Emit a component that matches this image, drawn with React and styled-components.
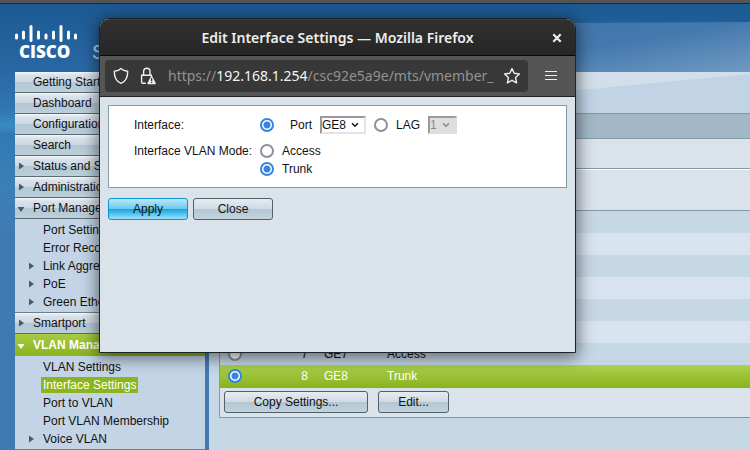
import React, { useState } from "react";
import styled, { createGlobalStyle, css } from "styled-components";

const GlobalStyle = createGlobalStyle`
  *, *::before, *::after { box-sizing: border-box; }
  html, body { margin: 0; height: 100%; overflow: hidden; }
  #root { height: 100%; }
  body { font: 12px/14px "Liberation Sans", Arial, sans-serif; color: #111; }
  button, select, input { font: inherit; color: inherit; margin: 0; }
`;

const Page = styled.div`
  height: 100%;
  display: flex;
  flex-direction: column;
  overflow: hidden;
  background: linear-gradient(#1b5992 0, #2a68a5 72px, #3077b1 110px, #3a8bc3 126px, #3079b4 134px, #3a80b8 180px, #407ab3 240px, #407ab3 100%);
`;

const WindowEdge = styled.div`
  flex: none;
  height: 4px;
  background: #555;
  border-bottom: 1px solid #1c2831;
`;

const Banner = styled.header`
  position: relative;
  flex: none;
  height: 68px;
  display: flex;
  align-items: flex-start;
  gap: 14px;
  padding: 20px 14px 0;
  &::before {
    content: "";
    position: absolute;
    inset: 18px 0 0 40%;
    background: linear-gradient(170deg, #3d70a4, #4479ae 60%, #6f9ac1);
    clip-path: polygon(0 5%, 100% 0, 100% 100%, 0 100%);
  }
`;

const Logo = styled.svg`
  position: relative;
  flex: none;
  display: block;
`;

const Product = styled.span`
  position: relative;
  padding-top: 16px;
  font: 20px/24px "Liberation Sans", Arial, sans-serif;
  color: #c3d6e8;
  white-space: nowrap;
`;

const Body = styled.div`
  flex: 1;
  min-height: 0;
  display: flex;
  gap: 4px;
  padding-left: 15px;
`;

const Nav = styled.nav`
  flex: none;
  width: 190px;
  background: #c2d4e6;
  overflow: hidden;
`;

const Section = styled.a`
  display: flex;
  align-items: center;
  height: ${(p) => (p.$active ? 22 : 21)}px;
  border-bottom: 1px solid ${(p) => (p.$active ? "#8a9aa8" : "#5b6b72")};
  color: ${(p) => (p.$active ? "#fff" : "#111")};
  font-weight: ${(p) => (p.$active ? 700 : 400)};
  text-decoration: none;
  white-space: nowrap;
  background: ${(p) =>
    p.$active
      ? "linear-gradient(#a6cb45, #8bb51e)"
      : "linear-gradient(#f4f7fa 0, #d9e2eb 3px, #cdd8e3 50%, #b3c8d5 50%, #bccfda 100%)"};
`;

const Marker = styled.svg`
  flex: none;
  display: block;
  width: 18px;
  height: 12px;
  fill: ${(p) => (p.$light ? "#fff" : "#4c5960")};
`;

const SubList = styled.ul`
  list-style: none;
  margin: 0;
  padding: 2px 0 1px 10px;
  border-bottom: 1px solid #6e808c;
`;

const SubItem = styled.li`
  display: flex;
  align-items: center;
  height: 18px;
  white-space: nowrap;
`;

const SubLink = styled.a`
  padding: 1px 2px;
  margin-left: -2px;
  text-decoration: none;
  color: ${(p) => (p.$current ? "#fff" : "#111")};
  background: ${(p) => (p.$current ? "#8bb51e" : "transparent")};
`;

const Main = styled.main`
  position: relative;
  flex: 1;
  min-width: 0;
  padding: 41px 0 0 10px;
  background: linear-gradient(#c1d3e5 0, #c1d3e5 40px, #c6d7e6 80px);
  &::before {
    content: "";
    position: absolute;
    top: 0;
    left: 0;
    right: 0;
    height: 42px;
    background: #d2dfea;
    clip-path: polygon(0 0, 100% 0, 100% 5%, 66% 46%, 0 100%);
  }
`;

const Panel = styled.section`
  position: relative;
  border: 1px solid #8499a5;
  border-right: 0;
  background: #dae2ea;
`;

const PanelTitle = styled.div`
  height: 25px;
  background: #a2b8c8;
  border-bottom: 1px solid #8499a5;
`;

const FilterBar = styled.div`
  height: 30px;
  border-bottom: 1px solid #8499a5;
`;

const PortTable = styled.table`
  width: 100%;
  border-spacing: 0;
  table-layout: fixed;
  border-bottom: 1px solid #8499a5;
  th { height: 42px; padding: 0; border-top: 1px solid #fff; border-bottom: 1px solid #8499a5; }
  td { height: 22px; padding: 0; }
  td:first-child { padding-left: 8px; }
  td:nth-child(2) { text-align: right; }
  td:nth-child(3) { padding-left: 16px; }
`;

const PortRow = styled.tr`
  background: ${(p) => (p.$alt ? "#d7e3ef" : "#c6d7e6")};
  ${(p) =>
    p.$selected &&
    css`
      color: #fff;
      background: linear-gradient(#add150, #8ab41f);
    `}
`;

const Radio = styled.input.attrs({ type: "radio" })`
  appearance: none;
  display: block;
  flex: none;
  width: 14px;
  height: 14px;
  border: 2px solid #8f8f9d;
  border-radius: 50%;
  background: #fff;
  &:checked {
    border-color: #3584e4;
    background: radial-gradient(circle, #3584e4 0 3px, #fff 4px);
  }
`;

const ButtonRow = styled.div`
  display: flex;
  gap: ${(p) => p.$gap}px;
  padding: ${(p) => (p.$inset ? "3px 4px 4px" : 0)};
`;

const Button = styled.button`
  width: ${(p) => p.$width}px;
  height: 22px;
  padding: 0;
  border: 1px solid ${(p) => (p.$primary ? "#0a94cb" : "#4f6069")};
  border-radius: 3px;
  background: ${(p) =>
    p.$primary
      ? "linear-gradient(#b9e6f8 0, #6ccbf0 48%, #18a2dc 50%, #2eb0e5 60%, #9be0fb 100%)"
      : "linear-gradient(#e6ecf2 0, #cfdae4 48%, #b2c6d3 50%, #c3d3de 100%)"};
`;

const Dialog = styled.div`
  position: absolute;
  top: 18px;
  left: 99px;
  width: 477px;
  height: 335px;
  display: flex;
  flex-direction: column;
  border: 1px solid #1d2429;
  border-radius: 10px 10px 0 0;
  overflow: hidden;
  background: #dae2ea;
  box-shadow: 0 3px 16px 2px rgba(0, 0, 0, 0.5);
`;

const TitleBar = styled.div`
  display: grid;
  grid-template-columns: 36px 1fr 36px;
  align-items: center;
  height: 37px;
  background: linear-gradient(#303030, #262626);
  border-top: 1px solid #3b3b3b;
  border-bottom: 1px solid #070707;
  font: 600 14px/20px "Noto Sans", sans-serif;
  color: #eeeeec;
`;

const Title = styled.h1`
  grid-column: 2;
  margin: 0;
  font: inherit;
  text-align: center;
  white-space: nowrap;
`;

const IconButton = styled.button`
  display: grid;
  place-items: center;
  width: ${(p) => p.$size}px;
  height: ${(p) => p.$size}px;
  flex: none;
  padding: 0;
  border: 0;
  background: none;
  color: #eeeeec;
`;

const TitleClose = styled(IconButton)`
  width: 36px;
  height: 34px;
`;

const Toolbar = styled.div`
  display: flex;
  align-items: center;
  gap: 14px;
  height: 41px;
  padding: 0 15px 0 5px;
  background: #555;
  border-bottom: 1px solid #1f1f1f;
`;

const AddressBar = styled.div`
  flex: 1;
  min-width: 0;
  display: flex;
  align-items: center;
  height: 32px;
  padding: 0 7px;
  border-radius: 4px;
  background: #383838;
`;

const Address = styled.div`
  flex: 1;
  min-width: 0;
  margin: 0 4px 0 2px;
  overflow: hidden;
  white-space: nowrap;
  font: 14px/24px "Noto Sans", sans-serif;
  color: #929292;
  b { font-weight: 400; color: #f5f5f5; }
`;

const Content = styled.form`
  display: flex;
  flex-direction: column;
  gap: 10px;
  padding: 8px;
`;

const Fields = styled.div`
  display: grid;
  grid-template-columns: 126px 1fr;
  row-gap: 8px;
  height: 83px;
  padding: 10px 0 0 25px;
  border: 1px solid #849ba4;
  background: #fff;
  align-content: start;
`;

const FieldLabel = styled.span`
  line-height: 18px;
  white-space: nowrap;
`;

const Choices = styled.div`
  display: flex;
  align-items: center;
  height: 18px;
`;

const ModeList = styled.div`
  display: flex;
  flex-direction: column;
`;

const Choice = styled.label`
  display: flex;
  align-items: center;
  gap: ${(p) => p.$gap}px;
  height: 18px;
  margin-right: 8px;
`;

const SelectBox = styled.span`
  display: grid;
  width: ${(p) => p.$width}px;
  margin-right: 8px;
  align-items: center;
  color: ${(p) => (p.$off ? "#8a8a8a" : "#111")};
  > * { grid-area: 1 / 1; }
  svg { justify-self: end; margin-right: 7px; pointer-events: none; }
  select {
    appearance: none;
    width: 100%;
    height: 18px;
    padding: 0;
    border: 2px solid;
    border-color: ${(p) => (p.$off ? "#9a9a9a #dedede #dedede #9a9a9a" : "#9a9a9a #e3e3e3 #e3e3e3 #9a9a9a")};
    border-radius: 0;
    background: ${(p) => (p.$off ? "#dedede" : "#fff")};
    opacity: 1;
  }
`;

const Chevron = () => (
  <svg width="8" height="6" viewBox="0 0 8 6" fill="none" stroke="currentColor" strokeWidth="1.4">
    <path d="M1 1.200 4 4.200 7 1.200" />
  </svg>
);

const Arrow = ({ kind, light }) => (
  <Marker viewBox="0 0 18 12" $light={light}>
    {kind === "closed" && <path d="M4 2.5 9 6 4 9.5z" />}
    {kind === "open" && <path d="M2.5 5h7L6 10z" />}
  </Marker>
);

const CiscoLogo = () => (
  <Logo width="64" height="44" viewBox="0 0 64 44" role="img" aria-label="Cisco" stroke="#fff" fill="none">
    <g strokeWidth="3" strokeLinecap="round">
      <path d="M2.500 11v3M9.500 8v6M17 2.500v14M24.500 8v6M32 11v3M39.500 8v6M47 2.500v14M54.500 8v6M61.500 11v3" />
    </g>
    <text x="5" y="34" fill="#fff" stroke="none" fontFamily="Open Sans" fontWeight="800" fontSize="17">CISCO</text>
  </Logo>
);

const sections = [
  { name: "Getting Started" },
  { name: "Dashboard" },
  { name: "Configuration Wizards" },
  { name: "Search" },
  { name: "Status and Statistics", arrow: "closed" },
  { name: "Administration", arrow: "closed" },
  {
    name: "Port Management",
    arrow: "open",
    items: [["Port Settings"], ["Error Recovery Settings"], ["Link Aggregation", 1], ["PoE", 1], ["Green Ethernet", 1]],
  },
  { name: "Smartport", arrow: "closed" },
  {
    name: "VLAN Management",
    arrow: "open",
    active: true,
    items: [["VLAN Settings"], ["Interface Settings"], ["Port to VLAN"], ["Port VLAN Membership"], ["Voice VLAN", 1]],
  },
];

const ports = [1, 2, 3, 4, 5, 6, 7, 8];

function SideNav() {
  return (
    <Nav>
      {sections.map((s) => (
        <React.Fragment key={s.name}>
          <Section href="#" $active={s.active}>
            <Arrow kind={s.arrow} light={s.active} />
            {s.name}
          </Section>
          {s.items && (
            <SubList>
              {s.items.map(([name, nested]) => (
                <SubItem key={name}>
                  <Arrow kind={nested ? "closed" : ""} />
                  <SubLink href="#" $current={name === "Interface Settings"}>{name}</SubLink>
                </SubItem>
              ))}
            </SubList>
          )}
        </React.Fragment>
      ))}
    </Nav>
  );
}

function PortPanel() {
  const [selected, setSelected] = useState(8);
  return (
    <Panel>
      <PanelTitle />
      <FilterBar />
      <PortTable>
        <colgroup>
          <col width="32" />
          <col width="56" />
          <col width="79" />
          <col />
        </colgroup>
        <thead>
          <tr><th colSpan="4" /></tr>
        </thead>
        <tbody>
          {ports.map((n) => (
            <PortRow key={n} $alt={n % 2 === 0} $selected={n === selected}>
              <td>
                <Radio name="entry" aria-label={`GE${n}`} checked={n === selected} onChange={() => setSelected(n)} />
              </td>
              <td>{n}</td>
              <td>GE{n}</td>
              <td>{n === 8 ? "Trunk" : "Access"}</td>
            </PortRow>
          ))}
        </tbody>
      </PortTable>
      <ButtonRow $gap={10} $inset>
        <Button type="button" $width={144}>Copy Settings...</Button>
        <Button type="button" $width={71}>Edit...</Button>
      </ButtonRow>
    </Panel>
  );
}

function EditDialog() {
  return (
    <Dialog role="dialog" aria-labelledby="dialog-title">
      <TitleBar>
        <Title id="dialog-title">Edit Interface Settings — Mozilla Firefox</Title>
        <TitleClose type="button" aria-label="Close window">
          <svg width="10" height="10" viewBox="0 0 10 10" stroke="currentColor" strokeWidth="2.2">
            <path d="M1.300 1.300 8.700 8.700M8.700 1.300 1.300 8.700" />
          </svg>
        </TitleClose>
      </TitleBar>
      <Toolbar>
        <AddressBar>
          <IconButton type="button" $size={18} aria-label="Tracking protection">
            <svg width="16" height="18" viewBox="0 0 16 18" fill="none" stroke="currentColor" strokeWidth="1.4" strokeLinejoin="round">
              <path d="M8 1.500C6.500 3 4 3.900 1.300 4.200C1.200 9.500 2.800 14.200 8 16.400C13.200 14.200 14.800 9.500 14.700 4.200C12 3.900 9.500 3 8 1.500Z" />
            </svg>
          </IconButton>
          <IconButton type="button" $size={36} aria-label="Connection not secure">
            <svg width="16" height="18" viewBox="0 0 16 18" fill="none" stroke="currentColor" strokeWidth="1.4">
              <path d="M3.600 8V4.500a3.200 3.200 0 0 1 6.400 0V8M5.800 16.300H2.800a1.200 1.200 0 0 1-1.200-1.200V8.300H12" />
              <path d="M11.600 9.500 15.200 16.500H8Z" fill="currentColor" strokeLinejoin="round" />
              <path d="M11.600 11v3M11.600 14.800v1.300" stroke="#383838" strokeWidth="1.300" />
            </svg>
          </IconButton>
          <Address role="textbox" aria-label="Address">
            https://<b>192.168.1.254</b>/csc92e5a9e/mts/vmember_
          </Address>
          <IconButton type="button" $size={18} aria-label="Bookmark this page">
            <svg width="18" height="18" viewBox="0 0 18 18" fill="none" stroke="currentColor" strokeWidth="1.4" strokeLinejoin="round">
              <path d="M9 1.600 11.200 6.300 16.400 7 12.600 10.600 13.600 15.900 9 13.300 4.400 15.900 5.400 10.600 1.600 7 6.800 6.300Z" />
            </svg>
          </IconButton>
        </AddressBar>
        <IconButton type="button" $size={18} aria-label="Open application menu">
          <svg width="12" height="10" viewBox="0 0 12 10" stroke="currentColor">
            <path d="M0 .5h12M0 4.500h12M0 8.500h12" />
          </svg>
        </IconButton>
      </Toolbar>
      <Content>
        <Fields>
          <FieldLabel>Interface:</FieldLabel>
          <Choices>
            <Choice $gap={16}><Radio name="interface" defaultChecked />Port</Choice>
            <SelectBox $width={46}>
              <select aria-label="Port"><option>GE8</option></select>
              <Chevron />
            </SelectBox>
            <Choice $gap={8}><Radio name="interface" />LAG</Choice>
            <SelectBox $width={29} $off>
              <select aria-label="LAG" disabled><option>1</option></select>
              <Chevron />
            </SelectBox>
          </Choices>
          <FieldLabel>Interface VLAN Mode:</FieldLabel>
          <ModeList>
            <Choice $gap={8}><Radio name="mode" />Access</Choice>
            <Choice $gap={8}><Radio name="mode" defaultChecked />Trunk</Choice>
          </ModeList>
        </Fields>
        <ButtonRow $gap={5}>
          <Button type="button" $primary $width={80}>Apply</Button>
          <Button type="button" $width={80}>Close</Button>
        </ButtonRow>
      </Content>
    </Dialog>
  );
}

export default function App() {
  return (
    <Page>
      <GlobalStyle />
      <WindowEdge />
      <Banner>
        <CiscoLogo />
        <Product>Small Business</Product>
      </Banner>
      <Body>
        <SideNav />
        <Main>
          <PortPanel />
        </Main>
      </Body>
      <EditDialog />
    </Page>
  );
}
